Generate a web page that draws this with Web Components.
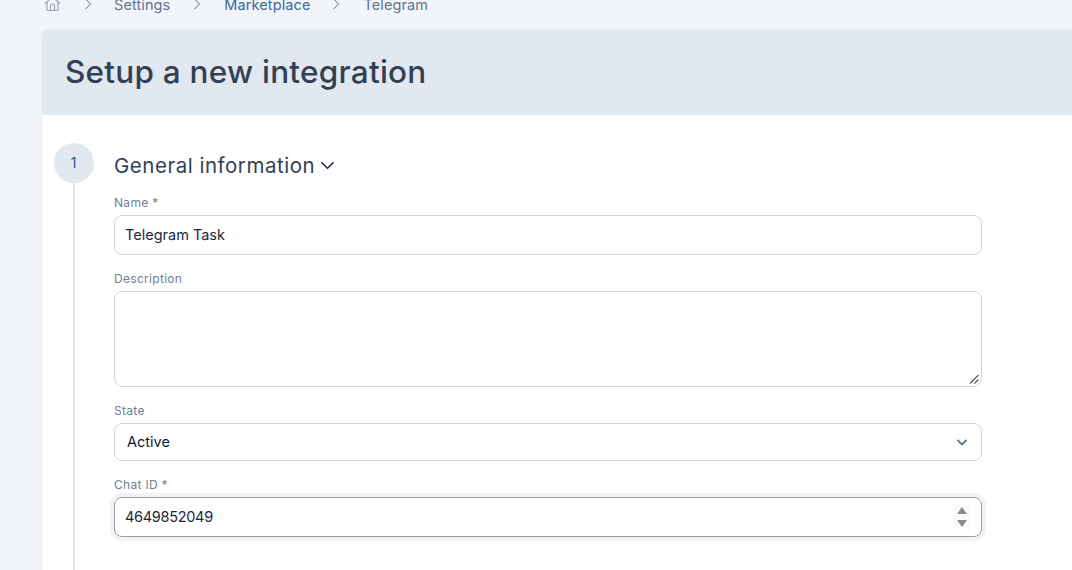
<!DOCTYPE html>
<html>
<head>
<meta charset="utf-8">
<title>Setup a new integration</title>
<style>
    html, body { margin: 0; height: 570px; overflow: hidden; }
    body { background: #f1f5f9; font-family: "Inter", "Liberation Sans", sans-serif; color: #334155; }
</style>
</head>
<body>
<app-breadcrumb>
    <span>Settings</span>
    <span class="link">Marketplace</span>
    <span>Telegram</span>
</app-breadcrumb>
<app-card title="Setup a new integration">
    <app-step number="1" heading="General information">
        <app-field label="Name *" value="Telegram Task"></app-field>
        <app-field label="Description" kind="textarea"></app-field>
        <app-field label="State" value="Active" kind="select"></app-field>
        <app-field label="Chat ID *" value="4649852049" kind="number"></app-field>
    </app-step>
</app-card>

<script>
const chevron = `<svg width="14" height="14" viewBox="0 0 14 14" fill="none" stroke="#94a3b8" stroke-width="1.2"><path d="M4.5 2l5 5-5 5"/></svg>`;

class AppBreadcrumb extends HTMLElement {
    constructor() {
        super();
        this.attachShadow({mode : "open"});
    }

    static get styles() {
        return `
            :host {
                display: flex;
                align-items: center;
                height: 16px;
                margin-top: -4px;
                margin-bottom: 18px;
                padding-left: 44px;
                font-size: 14.5px;
                letter-spacing: .1px;
                color: #64748b;
            }
            .home { display: flex; width: 17px; }
            .sep { display: flex; width: 14px; margin: 0 20px 0 20px; }
            .sep.first { margin: 0 19px 0 20px; }
            .sep.last { margin: 0 20px 0 19px; }
            ::slotted(.link) { color: #3b6a9a; }
        `;
    }

    connectedCallback() {
        this.render();
    }

    render() {
        const items = [...this.children];
        items.forEach((item, i) => item.slot = "s" + i);
        const cls = ["first", "", "last"];
        this.shadowRoot.innerHTML = `
            <style>${AppBreadcrumb.styles}</style>
            <span class="home">
                <svg width="17" height="16" viewBox="0 0 17 16" fill="none" stroke="#94a3b8" stroke-width="1.1"><path d="M1 7.5L8.5 1 16 7.5M3 6v7.5a1 1 0 0 0 1 1h9a1 1 0 0 0 1-1V6M6.5 14.500V10a2 2 0 0 1 4 0v4.500"/></svg>
            </span>
            ${items.map((item, i) => `<span class="sep ${cls[i]}">${chevron}</span><slot name="s${i}"></slot>`).join("")}
        `;
    }
}

class AppCard extends HTMLElement {
    constructor() {
        super();
        this.attachShadow({mode : "open"});
    }

    connectedCallback() {
        this.shadowRoot.innerHTML = `
            <style>
                :host {
                    display: block;
                    margin: 0 -12px 0 42px;
                    height: 640px;
                    background: #fff;
                    border-radius: 6px 6px 0 0;
                    box-shadow: 0 0 2px rgba(100, 116, 139, .2);
                }
                header {
                    display: flex;
                    align-items: center;
                    height: 85px;
                    padding-left: 23px;
                    background: #e2e8f0;
                    border-radius: 6px 6px 0 0;
                }
                h1 {
                    margin: -3px 0 0;
                    font-size: 31.5px;
                    font-weight: 500;
                    letter-spacing: .24px;
                    color: #334155;
                }
                .body { padding: 28px 0 0 12px; }
            </style>
            <header><h1>${this.getAttribute("title")}</h1></header>
            <div class="body"><slot></slot></div>
        `;
        this.removeAttribute("title");
    }
}

class AppStep extends HTMLElement {
    constructor() {
        super();
        this.attachShadow({mode : "open"});
    }

    connectedCallback() {
        this.shadowRoot.innerHTML = `
            <style>
                :host { display: flex; gap: 20px; height: 600px; }
                .rail { display: flex; flex-direction: column; align-items: center; width: 40px; }
                .num {
                    display: flex;
                    flex: none;
                    align-items: center;
                    justify-content: center;
                    width: 40px;
                    height: 40px;
                    padding: 0 1px 2px 0;
                    box-sizing: border-box;
                    border-radius: 50%;
                    background: #e2e8f0;
                    color: #1e5a8c;
                    font-size: 14px;
                }
                .line { flex: 1; width: 2px; background: #e2e8f0; }
                .content { width: 868px; }
                h2 {
                    display: flex;
                    align-items: center;
                    gap: 5px;
                    height: 44px;
                    margin: 0 0 8px;
                    font-size: 20.5px;
                    font-weight: 400;
                    letter-spacing: .52px;
                    color: #334155;
                }
            </style>
            <div class="rail">
                <div class="num">${this.getAttribute("number")}</div>
                <div class="line"></div>
            </div>
            <div class="content">
                <h2>${this.getAttribute("heading")}
                    <svg width="15" height="15" viewBox="0 0 16 16" fill="none" stroke="#1e293b" stroke-width="1.600"><path d="M1.500 4.500L8 11l6.500-6.500"/></svg>
                </h2>
                <slot></slot>
            </div>
        `;
    }
}

class AppField extends HTMLElement {
    constructor() {
        super();
        this.attachShadow({mode : "open"});
    }

    static get styles() {
        return `
            :host { display: block; margin-bottom: 16px; }
            label {
                display: block;
                height: 20px;
                font-size: 12px;
                letter-spacing: .3px;
                line-height: 16px;
                color: #718096;
            }
            .box {
                display: flex;
                align-items: center;
                justify-content: space-between;
                position: relative;
                box-sizing: border-box;
                height: 40px;
                padding: 0 10px;
                border: 1px solid #d1d5db;
                border-radius: 8px;
                background: #fff;
                font-size: 14.5px;
                color: #1e293b;
            }
            .box span { margin-top: -2px; }
            .textarea { height: 96px; }
            .select { height: 38px; padding: 0 12px; color: #0f172a; }
            .number {
                border-color: #9a9aa6;
                box-shadow: 0 0 0 4px #f3f3f5;
            }
            .number span { letter-spacing: -.3px; }
            .grip { position: absolute; right: 1px; bottom: 1px; }
            .spin { margin-right: 1px; padding: 1px 2px; background: #fafafa; }
        `;
    }

    connectedCallback() {
        const kind = this.getAttribute("kind") || "text";
        let extra = "";
        if (kind == "textarea") {
            extra = `<svg class="grip" width="11" height="11" viewBox="0 0 11 11" stroke="#555" stroke-width="1.100"><path d="M1 9.500L9.500 1M5.500 9.500L9.500 5.500"/></svg>`;
        } else if (kind == "select") {
            extra = `<svg width="14" height="14" viewBox="0 0 14 14" fill="none" stroke="#64748b" stroke-width="1.800"><path d="M2.500 5l4.500 4.500L11.500 5"/></svg>`;
        } else if (kind == "number") {
            extra = `<svg class="spin" width="12" height="22" viewBox="0 0 12 22" fill="#8a8a8a"><path d="M6 1l5 7H1zM6 21l-5-7h10z"/></svg>`;
        }
        this.shadowRoot.innerHTML = `
            <style>${AppField.styles}</style>
            <label>${this.getAttribute("label")}</label>
            <div class="box ${kind}"><span>${this.getAttribute("value") || ""}</span>${extra}</div>
        `;
    }
}

customElements.define("app-breadcrumb", AppBreadcrumb);
customElements.define("app-card", AppCard);
customElements.define("app-step", AppStep);
customElements.define("app-field", AppField);
</script>
</body>
</html>
